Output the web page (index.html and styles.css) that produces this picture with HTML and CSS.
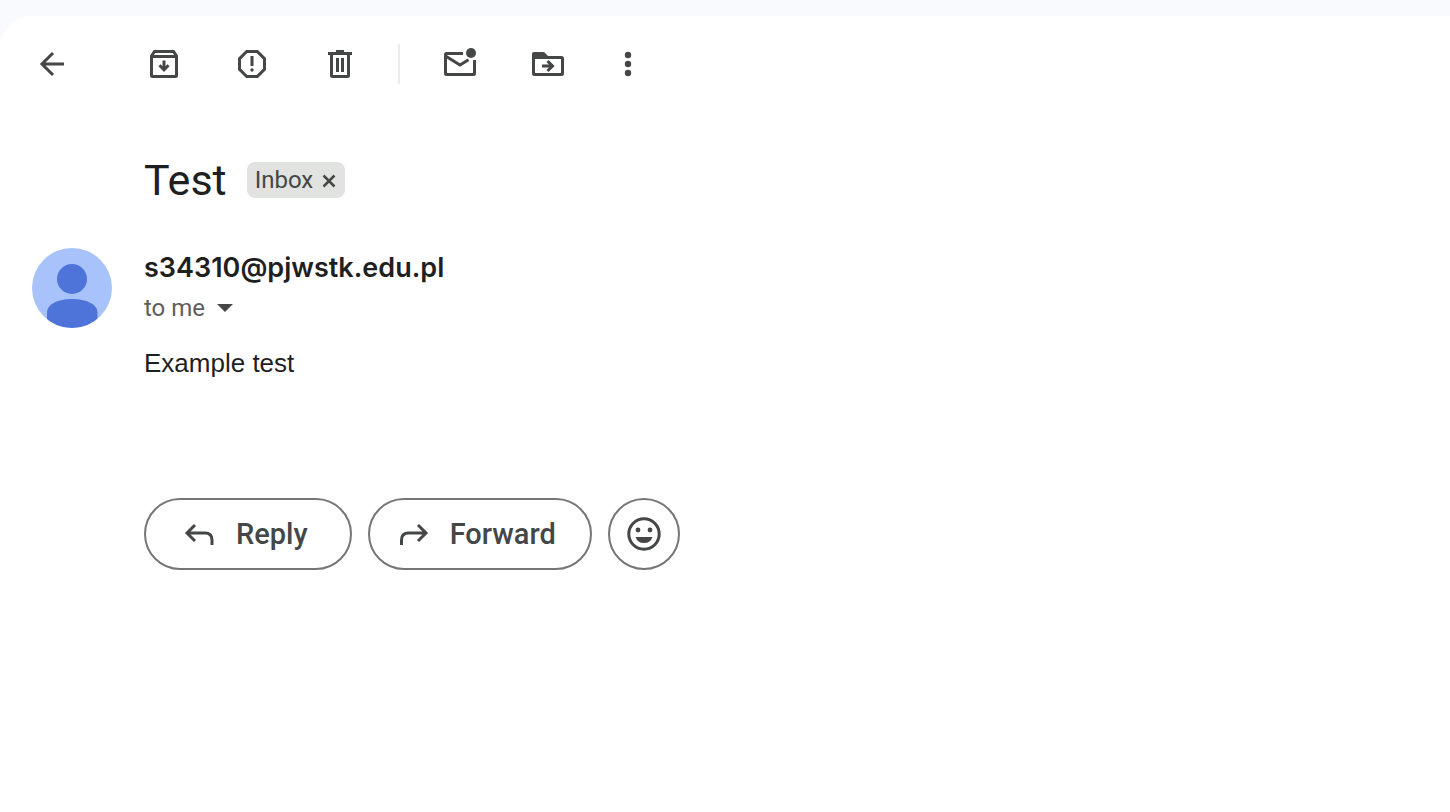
FILE: index.html
```html
<!DOCTYPE html>
<html lang="en">
<head>
<meta charset="utf-8">
<meta name="viewport" content="width=device-width, initial-scale=1">
<title>Test</title>
<link rel="stylesheet" href="styles.css">
</head>
<body>
<main class="panel">
  <div class="toolbar" role="toolbar" aria-label="Message actions">
    <button class="tool tool-back" type="button" aria-label="Back">
      <svg class="icon line" viewBox="0 0 40 40"><path d="M32 20H11M21 9L10 20l11 11"/></svg>
    </button>
    <button class="tool" type="button" aria-label="Archive">
      <svg class="icon line" viewBox="0 0 40 40"><path d="M7.500 12L10.500 7.500h19l3 4.500V31.500q0 1-1 1h-23q-1 0-1-1ZM7.500 12.500h25M20 16.500V25M15.500 21.300l4.500 4.500 4.500-4.500"/></svg>
    </button>
    <button class="tool" type="button" aria-label="Report spam">
      <svg class="icon line" viewBox="0 0 40 40"><path d="M14.700 7.500h10.600l7.200 7.200v10.600l-7.200 7.200H14.700l-7.200-7.200V14.700ZM20 12v10"/><circle class="solid" cx="20" cy="26" r="1.700"/></svg>
    </button>
    <button class="tool" type="button" aria-label="Delete">
      <svg class="icon line" viewBox="0 0 40 40"><path d="M8 9.500h24M16 7.500h8M11.500 10v21.500q0 1 1 1h15q1 0 1-1V10M17.500 14v14M22.500 14v14"/></svg>
    </button>
    <span class="divider"></span>
    <button class="tool" type="button" aria-label="Mark as unread">
      <svg class="icon line" viewBox="0 0 40 40"><path d="M23 9.500H6.500q-1 0-1 1v19q0 1 1 1h27q1 0 1-1V16M5.500 12l14.500 9 8.500-5.300"/><circle class="solid" cx="31" cy="9" r="5"/></svg>
    </button>
    <button class="tool" type="button" aria-label="Move to">
      <svg class="icon line" viewBox="0 0 40 40"><path class="solid" d="M4 15V10q0-2 2-2h9q1 0 1.600.6L20 12v3Z"/><path d="M5.500 12v17.500q0 1 1 1h27q1 0 1-1v-15q0-1-1-1h-28M14 22h10M19.500 17l5 5-5 5"/></svg>
    </button>
    <button class="tool tool-more" type="button" aria-label="More">
      <svg class="icon" viewBox="0 0 40 40"><circle cx="20" cy="11" r="3.200"/><circle cx="20" cy="20" r="3.200"/><circle cx="20" cy="29" r="3.200"/></svg>
    </button>
  </div>

  <header class="subject">
    <h1 class="title">Test</h1>
    <span class="label">Inbox
      <button class="label-remove" type="button" aria-label="Remove label Inbox">
        <svg class="cross" viewBox="0 0 16 16"><path d="M2.500 3.500l11 11M13.500 3.500l-11 11"/></svg>
      </button>
    </span>
  </header>

  <article class="message">
    <svg class="avatar" viewBox="0 0 80 80" role="img" aria-label="Sender">
      <defs><clipPath id="disc"><circle cx="40" cy="40" r="40"/></clipPath></defs>
      <g clip-path="url(#disc)"><path class="avatar-bg" d="M0 0h80v80H0z"/><circle class="avatar-fg" cx="40" cy="31" r="15"/><path class="avatar-fg" d="M15 80V65C15 56 26 51 40 51s25.500 5 25.500 14v15Z"/></g>
    </svg>
    <div class="content">
      <h2 class="sender">s34310@pjwstk.edu.pl</h2>
      <button class="recipient" type="button">to me
        <svg class="caret" viewBox="0 0 16 8"><path d="M0 0h16L8 8Z"/></svg>
      </button>
      <p class="body">Example test</p>
      <div class="actions">
        <button class="action action-reply" type="button">
          <svg class="icon line" viewBox="0 0 40 40"><path d="M32 31V26q0-7-7-7H8M15 11L7 19l8 8"/></svg>Reply
        </button>
        <button class="action action-forward" type="button">
          <svg class="icon line" viewBox="0 0 40 40"><path d="M7.500 31V26q0-7 7-7H31M24 11l8 8-8 8"/></svg>Forward
        </button>
        <button class="action action-react" type="button" aria-label="Add reaction">
          <svg class="icon line" viewBox="0 0 40 40"><circle cx="20" cy="20" r="15.200"/><circle class="solid" cx="14" cy="16" r="2.400"/><circle class="solid" cx="26" cy="16" r="2.400"/><path class="solid" d="M11.500 23h17q-2 6-8.500 6t-8.500-6Z"/></svg>
        </button>
      </div>
    </div>
  </article>
</main>
</body>
</html>
```
FILE: styles.css
```css
* {
  box-sizing: border-box;
}

body {
  margin: 0;
  padding-top: 16px;
  min-height: 100vh;
  display: flex;
  background: #f8fafd;
  color: #1f1f1f;
  font-family: Roboto, "Liberation Sans", sans-serif;
}

button {
  padding: 0;
  border: 0;
  background: none;
  color: #444746;
  font: inherit;
  cursor: pointer;
}

.panel {
  flex: 1;
  padding: 28px 32px;
  background: #fff;
  border-top-left-radius: 32px;
}

.icon {
  display: block;
  width: 40px;
  height: 40px;
  flex: none;
  fill: #444746;
}

.line {
  fill: none;
  stroke: #444746;
  stroke-width: 3;
}

.solid {
  fill: #444746;
  stroke: none;
}

.toolbar {
  display: flex;
  align-items: center;
  gap: 48px;
}

.tool-back {
  margin-right: 24px;
}

.divider {
  width: 2px;
  height: 40px;
  margin: 0 -8px 0 -10px;
  background: #ebebeb;
}

.tool-more {
  margin-left: -8px;
}

.subject {
  display: flex;
  align-items: center;
  gap: 20px;
  margin: 68px 0 40px 112px;
}

.title {
  margin: 0;
  font-size: 43px;
  line-height: 56px;
  font-weight: 400;
}

.label {
  display: flex;
  align-items: center;
  gap: 8px;
  height: 36px;
  padding: 0 8px;
  border-radius: 8px;
  background: #e1e3e1;
  color: #444746;
  font-size: 24px;
}

.cross {
  display: block;
  width: 16px;
  height: 16px;
  fill: none;
  stroke: #444746;
  stroke-width: 2.5;
}

.message {
  display: flex;
  align-items: flex-start;
  gap: 32px;
}

.avatar {
  width: 80px;
  height: 80px;
  flex: none;
}

.avatar-bg {
  fill: #a8c3fb;
}

.avatar-fg {
  fill: #4f74d9;
}

.sender {
  margin: 0;
  font-family: Inter, sans-serif;
  font-size: 27px;
  line-height: 40px;
  font-weight: 600;
}

.recipient {
  display: flex;
  align-items: center;
  gap: 12px;
  color: #5e5e5e;
  font-size: 24px;
  line-height: 40px;
}

.caret {
  width: 16px;
  height: 8px;
  fill: #444746;
}

.body {
  margin: 16px 0 116px;
  font-family: "Liberation Sans", Arial, sans-serif;
  font-size: 26px;
  line-height: 38px;
}

.actions {
  display: flex;
  gap: 16px;
}

.action {
  display: flex;
  align-items: center;
  gap: 16px;
  height: 72px;
  border: 2px solid #747775;
  border-radius: 36px;
  font-size: 29px;
  font-weight: 500;
}

.action-reply {
  padding: 0 42px 0 34px;
}

.action-forward {
  padding: 0 34px 0 24px;
}

.action-react {
  padding: 0 14px;
}
```
